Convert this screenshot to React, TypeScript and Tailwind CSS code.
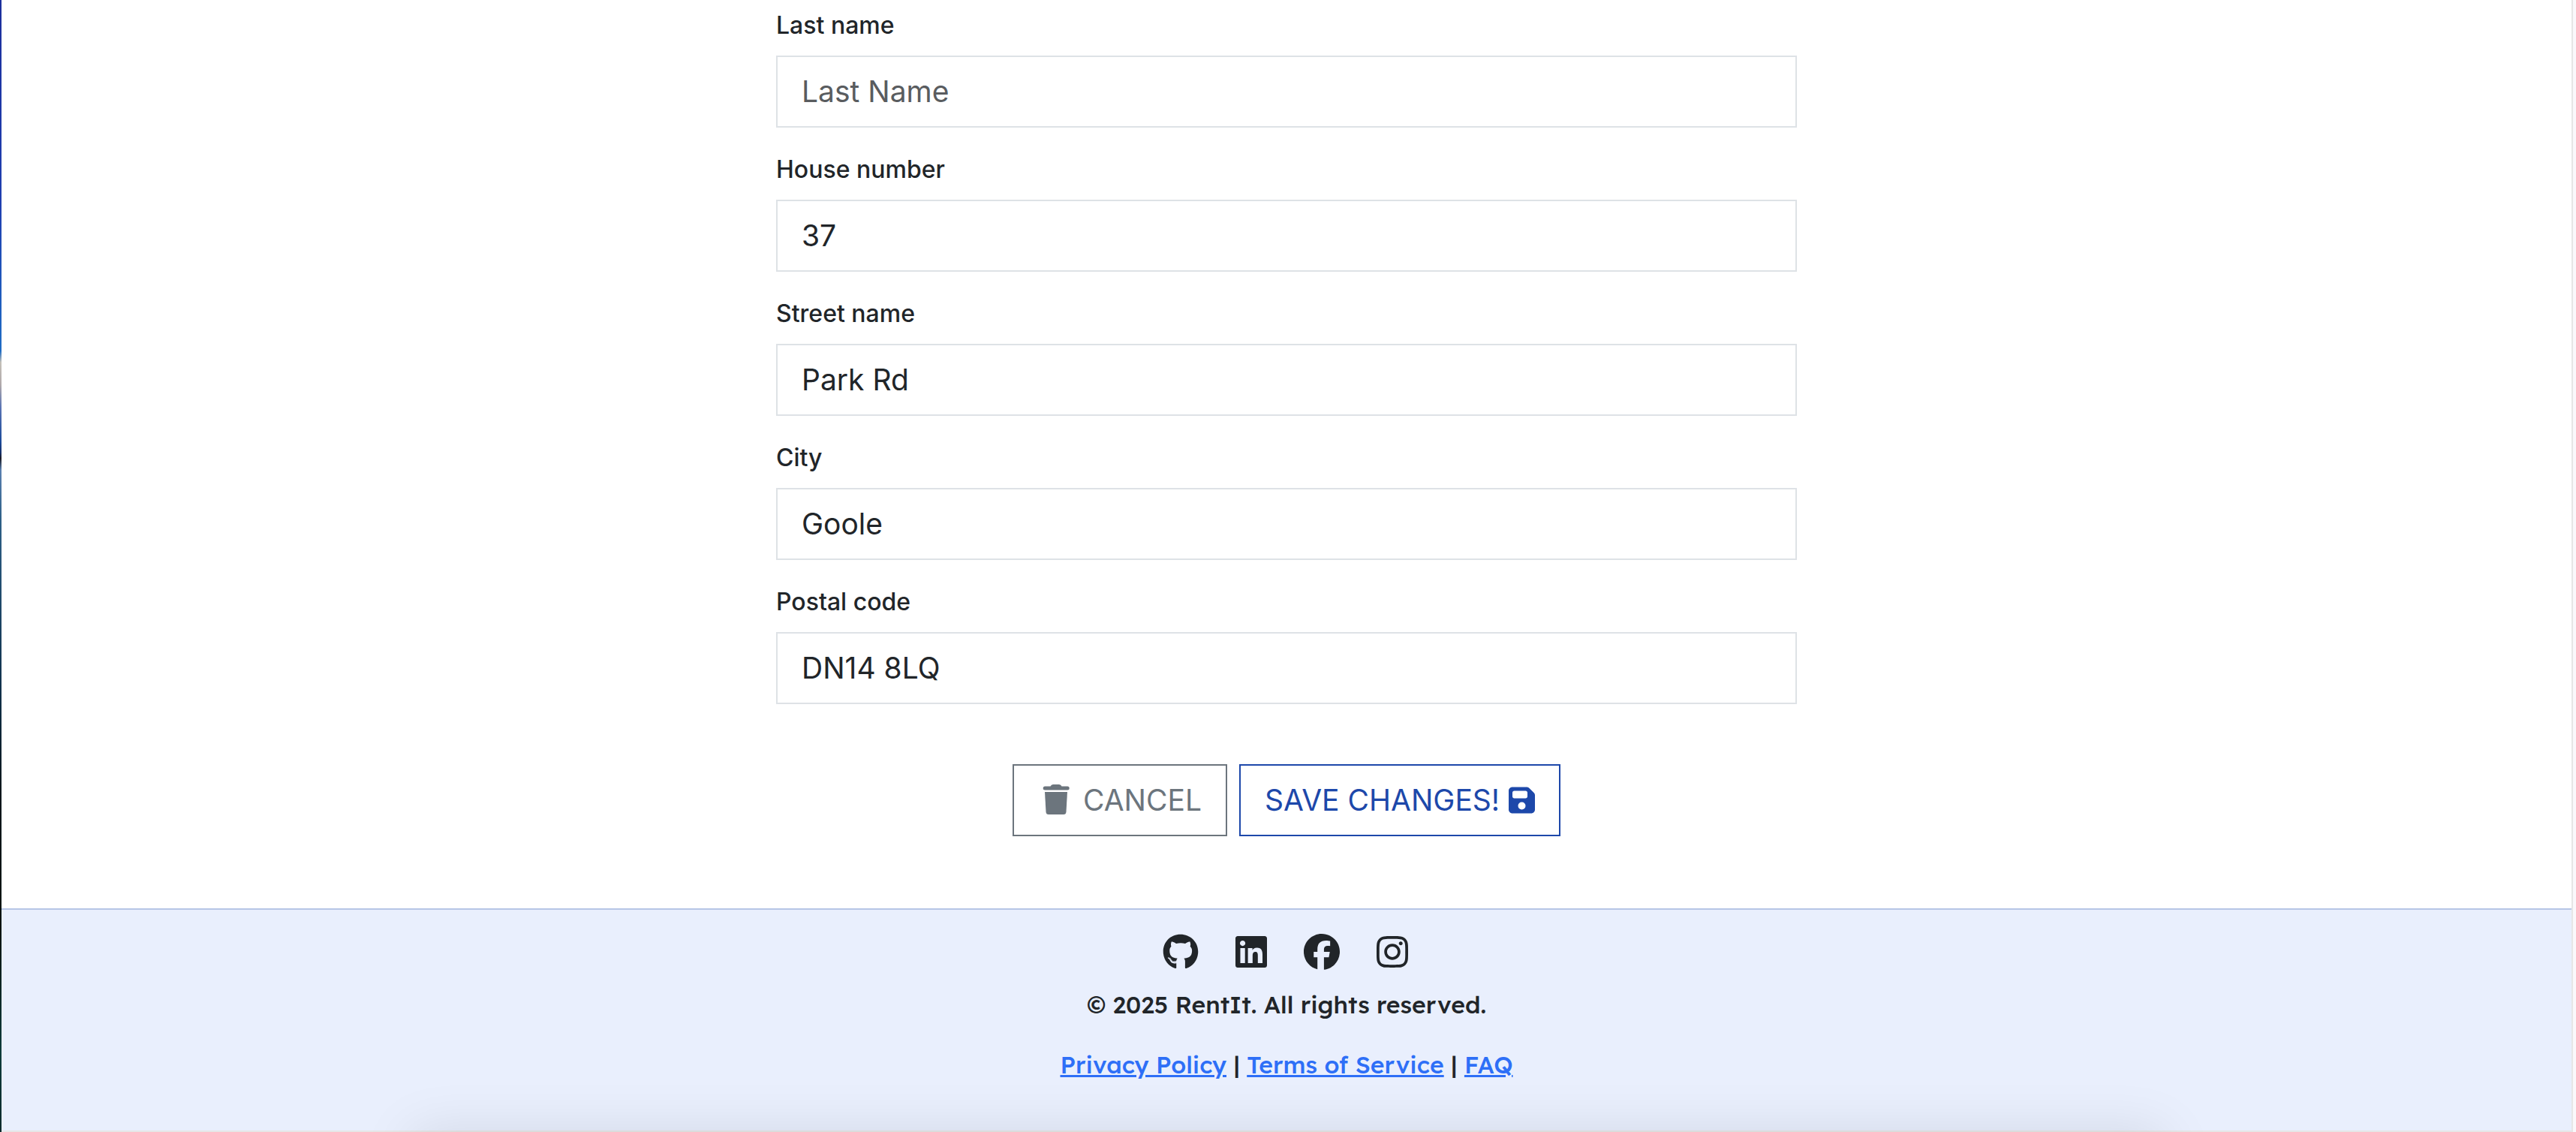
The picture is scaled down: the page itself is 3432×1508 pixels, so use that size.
import { FaGithub, FaLinkedin, FaFacebook, FaInstagram, FaFloppyDisk } from "react-icons/fa6";

const fields = [
  { id: "last-name", label: "Last name", value: "", placeholder: "Last Name" },
  { id: "house-number", label: "House number", value: "37", placeholder: "House number" },
  { id: "street-name", label: "Street name", value: "Park Rd", placeholder: "Street name" },
  { id: "city", label: "City", value: "Goole", placeholder: "City" },
  { id: "postal-code", label: "Postal code", value: "DN14 8LQ", placeholder: "Postal code" },
];

const socials = [
  { name: "GitHub", Icon: FaGithub },
  { name: "LinkedIn", Icon: FaLinkedin },
  { name: "Facebook", Icon: FaFacebook },
  { name: "Instagram", Icon: FaInstagram },
];

function TrashIcon() {
  return (
    <svg viewBox="0 0 48 48" className="size-12" fill="currentColor" aria-hidden="true">
      <path d="M16.500 5.500Q17.500 3 20 3H28Q30.500 3 31.500 5.500H39.200A2.500 2.500 0 0 1 39.200 10.500H9.200A2.500 2.500 0 0 1 9.200 5.500Z" />
      <path d="M9 13H39L37.500 39.500Q37.200 43 34 43H14Q10.800 43 10.500 39.500Z" />
    </svg>
  );
}

function Field({ id, label, value, placeholder }: (typeof fields)[number]) {
  return (
    <div className="mb-8">
      <label htmlFor={id} className="mb-4 block text-[32px] leading-[48px] font-medium">
        {label}
      </label>
      <input
        id={id}
        type="text"
        defaultValue={value}
        placeholder={placeholder}
        className="block h-24 w-full border-2 border-[#dee2e6] bg-white px-8 pb-0.5 text-[39px] leading-[60px] placeholder:text-[#595c5f]"
      />
    </div>
  );
}

export default function App() {
  return (
    <div className="relative flex min-h-screen overflow-hidden bg-[#faf8fb] font-['Inter',sans-serif] text-[#212529]">
      <div className="w-[2px] shrink-0 bg-[linear-gradient(to_bottom,#1c2f9c_0%,#1f3fb0_18%,#1f6cc4_31%,#c4c0b8_32%,#b0a9ab_34%,#5a74b4_36%,#1b4a9a_39%,#15306a_40%,#1a1a24_40.5%,#5a80b0_41.5%,#2d5f86_46%,#123450_60%,#06151a_70%,#04120f_82%,#0e3b3a_93%,#0a2a2c_100%)]" />
      <div className="flex min-w-0 grow flex-col border-r-2 border-b-2 border-[#e6e6e6] bg-white">
        <main className="grow px-4 pt-[10px] pb-24">
          <form className="mx-auto max-w-[1360px]">
            {fields.map((field) => (
              <Field key={field.id} {...field} />
            ))}
            <div className="flex justify-center gap-4 pt-12 text-[39px] leading-[60px]">
              <button
                type="button"
                className="flex items-center gap-3 border-2 border-[#6c757d] px-8 py-4 text-[#6c757d]"
              >
                <TrashIcon />
                CANCEL
              </button>
              <button
                type="submit"
                className="flex items-center gap-3 border-2 border-[#1d48aa] px-8 py-4 text-[#1d48aa]"
              >
                SAVE CHANGES!
                <FaFloppyDisk className="h-10 w-[35px]" />
              </button>
            </div>
          </form>
        </main>
        <footer className="border-t-2 border-[#b6c5e6] bg-[#e9effd] pt-8 pb-16 text-center font-['Lexend','Inter',sans-serif] text-[32px] leading-[48px] font-medium">
          <nav aria-label="Social media" className="mb-[22px] flex justify-center gap-[46px]">
            {socials.map(({ name, Icon }) => (
              <a key={name} href="#" aria-label={name}>
                <Icon className="size-12" />
              </a>
            ))}
          </nav>
          <p className="mb-8">© 2025 RentIt. All rights reserved.</p>
          <p>
            <a href="#" className="text-[#2e6ff7] underline">Privacy Policy</a>
            {" | "}
            <a href="#" className="text-[#2e6ff7] underline">Terms of Service</a>
            {" | "}
            <a href="#" className="text-[#2e6ff7] underline">FAQ</a>
          </p>
        </footer>
      </div>
      <div className="w-1 shrink-0" />
      <div className="pointer-events-none absolute inset-x-[16%] top-full h-40 shadow-[0_0_72px_rgba(0,0,0,0.10)]" />
    </div>
  );
}
